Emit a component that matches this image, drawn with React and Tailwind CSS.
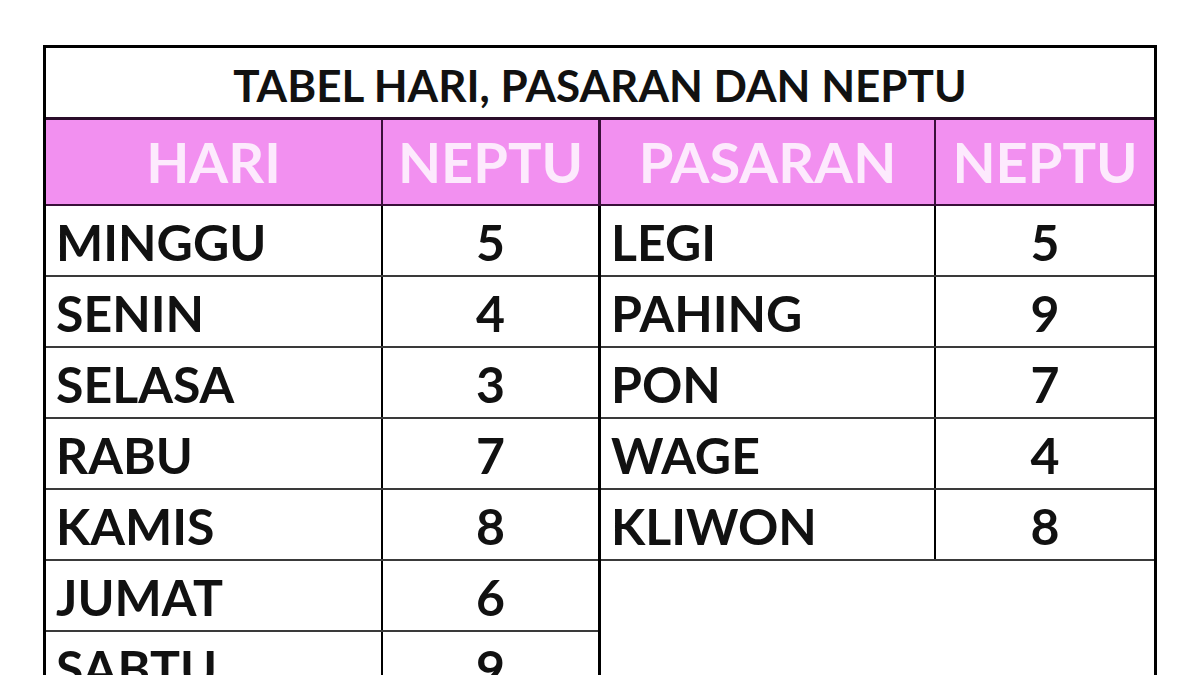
const hari = [
  ["MINGGU", 5],
  ["SENIN", 4],
  ["SELASA", 3],
  ["RABU", 7],
  ["KAMIS", 8],
  ["JUMAT", 6],
  ["SABTU", 9],
];

const pasaran = [
  ["LEGI", 5],
  ["PAHING", 9],
  ["PON", 7],
  ["WAGE", 4],
  ["KLIWON", 8],
];

const font = { fontFamily: "Lato, 'Open Sans', sans-serif" };

export default function App() {
  return (
    <div className="min-h-screen bg-white pt-[45px] pl-[43px] overflow-hidden" style={font}>
      <div className="w-[1114px] border-[3px] border-b-0 border-black">
        {/* Title */}
        <div className="h-[72px] pt-[4px] border-b-[3px] border-[#2a0d2a] flex items-center justify-center text-[44px] font-bold text-[#111] leading-none">
          TABEL HARI, PASARAN DAN NEPTU
        </div>

        {/* Header */}
        <div className="flex h-[86px] bg-[#f290f0] border-b-2 border-[#3a103a] text-[56px] font-bold text-[#fdeafd] leading-none">
          <div className="w-[337px] border-r-2 border-[#3a103a] flex items-center justify-center">HARI</div>
          <div className="w-[218px] border-r-[3px] border-[#3a103a] flex items-center justify-center">NEPTU</div>
          <div className="w-[335px] border-r-2 border-[#3a103a] flex items-center justify-center">PASARAN</div>
          <div className="flex-1 flex items-center justify-center">NEPTU</div>
        </div>

        {/* Body */}
        <div className="flex text-[50px] font-bold text-[#111] leading-none">
          <div className="w-[555px] border-r-[3px] border-black">
            {hari.map(([name, val]) => (
              <div key={name} className="flex h-[71px] border-b-2 border-[#3a3a3a]">
                <div className="w-[337px] border-r-2 border-black flex items-center pl-[10px] pt-[3px]">{name}</div>
                <div className="flex-1 flex items-center justify-center pt-[3px]">{val}</div>
              </div>
            ))}
          </div>
          <div className="flex-1">
            {pasaran.map(([name, val]) => (
              <div key={name} className="flex h-[71px] border-b-2 border-[#3a3a3a]">
                <div className="w-[335px] border-r-2 border-black flex items-center pl-[10px] pt-[3px]">{name}</div>
                <div className="flex-1 flex items-center justify-center pt-[3px]">{val}</div>
              </div>
            ))}
          </div>
        </div>
      </div>
    </div>
  );
}
